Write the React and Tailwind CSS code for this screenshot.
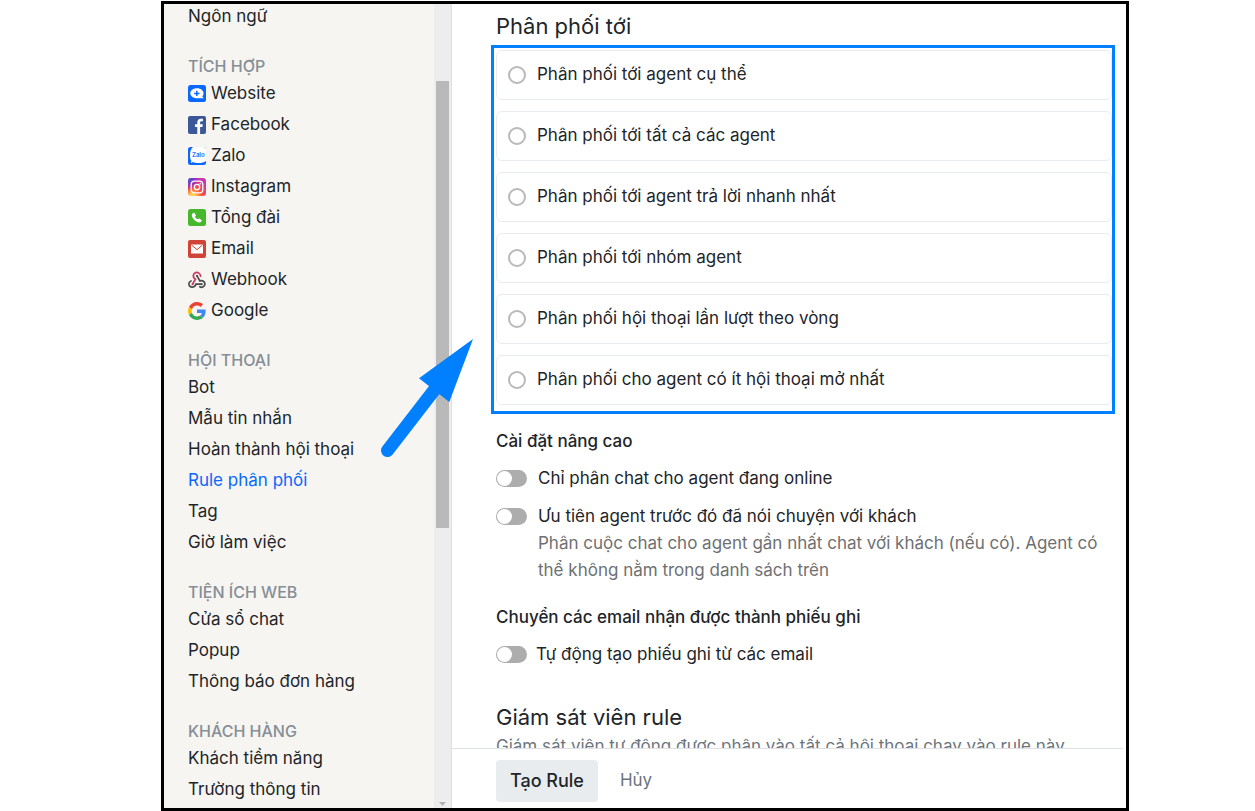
import React, { useState } from 'react';

const WebsiteIcon = () => (
    <svg viewBox="0 0 18 18" className="w-[18px] h-[18px]" aria-hidden="true">
        <rect width="18" height="17" rx="2.5" fill="#0a68ff" />
        <path d="M9 3.300c3.800 0 6.500 2.200 6.500 5 0 1.300-.5 2.300-1.200 3.100l1.400 1.900H9c-3.800 0-6.700-2.200-6.700-5s2.900-5 6.700-5z" fill="#fff" />
        <path d="M8.800 5.700v5.400M6.100 8.400h5.400" stroke="#0a68ff" strokeWidth="1.500" />
    </svg>
);

const FacebookIcon = () => (
    <svg viewBox="0 0 18 18" className="w-[18px] h-[18px]" aria-hidden="true">
        <rect width="18" height="18" rx="2" fill="#3b5998" />
        <path d="M9.300 18v-7H7V8.300h2.300V6.200c0-2.300 1.400-3.500 3.500-3.500 1 0 1.800.1 2.100.1v2.400h-1.400c-1.100 0-1.400.6-1.400 1.400v1.700h2.700l-.4 2.700h-2.300v7z" fill="#fff" />
    </svg>
);

const ZaloIcon = () => (
    <svg viewBox="0 0 18 18" className="w-[18px] h-[18px]" aria-hidden="true">
        <rect width="18" height="18" rx="2.500" fill="#0a68ff" />
        <path d="M5 0h10.500A2.500 2.500 0 0 1 18 2.500V14c-2 1.500-4.500 2-7.500 2-2.300 0-4.200-.3-5.500-1-.7.500-1.600.7-2.500.6.600-.5.9-1 .9-1.600C2.300 12.500 2 10.500 2 8c0-3.500 1-6.500 3-8z" fill="#fff" />
        <text x="10.300" y="10.300" textAnchor="middle" fontSize="6" fontWeight="700" fontFamily="Inter, sans-serif" fill="#2a7bff">Zalo</text>
    </svg>
);

const InstagramIcon = () => (
    <svg viewBox="0 0 18 18" className="w-[18px] h-[18px]" aria-hidden="true">
        <defs>
            <radialGradient id="ig-warm" cx="0.25" cy="1.05" r="1">
                <stop offset="0" stopColor="#ffdd55" />
                <stop offset="0.15" stopColor="#ffcf50" />
                <stop offset="0.5" stopColor="#ff543e" />
                <stop offset="1" stopColor="#c837ab" />
            </radialGradient>
            <radialGradient id="ig-cool" cx="-0.05" cy="0" r="0.7">
                <stop offset="0" stopColor="#3771c8" />
                <stop offset="0.3" stopColor="#5a4fd0" />
                <stop offset="1" stopColor="#6600ff" stopOpacity="0" />
            </radialGradient>
        </defs>
        <rect width="18" height="18" rx="3" fill="url(#ig-warm)" />
        <rect width="18" height="18" rx="3" fill="url(#ig-cool)" />
        <rect x="3.200" y="3.200" width="11.600" height="11.600" rx="3.400" fill="none" stroke="#fff" strokeWidth="1.300" />
        <circle cx="9" cy="9" r="2.700" fill="none" stroke="#fff" strokeWidth="1.300" />
        <circle cx="12.300" cy="5.700" r="0.800" fill="#fff" />
    </svg>
);

const PhoneIcon = () => (
    <svg viewBox="0 0 18 18" className="w-[18px] h-[18px]" aria-hidden="true">
        <rect width="18" height="17" rx="2.500" fill="#47b72b" />
        <path d="M4.300 4.700c.7-.9 1.600-1.300 2.200-.7l1.200 1.700c.4.700 0 1.200-.7 1.800.5 1.300 1.500 2.200 2.900 2.800.6-.7 1.100-1 1.800-.6l1.700 1.200c.6.600.2 1.400-.6 2.100-1 .8-2.700.6-4.400-.4-2-1.200-3.500-2.900-4.200-4.800-.4-1.200-.5-2.300.1-3.100z" fill="#fff" />
    </svg>
);

const EmailIcon = () => (
    <svg viewBox="0 0 18 18" className="w-[18px] h-[18px]" aria-hidden="true">
        <rect width="18" height="18" rx="2" fill="#d04437" />
        <rect x="3" y="4.500" width="12" height="9" rx="0.500" fill="#fff" />
        <path d="M3.500 5L9 9.700 14.500 5" fill="none" stroke="#d04437" strokeWidth="1" />
    </svg>
);

const WebhookIcon = () => (
    <svg viewBox="0 0 18 18" className="w-[18px] h-[18px]" fill="none" strokeWidth="1.700" strokeLinecap="round" aria-hidden="true">
        <path d="M9 4.800l2.900 5.100c2.700-.9 5 .9 5 3.200 0 2.500-2.900 4-5.100 2.600" stroke="#4b4b4b" />
        <path d="M13.600 13.200H7.900c-.5 3.600-6 3.900-6.900.6-.4-1.800.6-3.200 2-3.800" stroke="#4b4b4b" />
        <path d="M4.600 13l2.800-4.800C5.600 7.100 5 5.500 5.500 3.800 6.200 1.500 9 .7 10.900 2.100c1.200.8 1.700 1.900 1.700 3.100" stroke="#c73a63" />
        <circle cx="9" cy="4.700" r="1" fill="#4b4b4b" />
        <circle cx="4.500" cy="13.200" r="1" fill="#c73a63" />
        <circle cx="13.600" cy="13.200" r="1" fill="#4b4b4b" />
    </svg>
);

const GoogleIcon = () => (
    <svg viewBox="0 0 48 48" className="w-[18px] h-[18px]" aria-hidden="true">
        <path fill="#EA4335" d="M24 9.500c3.540 0 6.710 1.220 9.210 3.600l6.850-6.850C35.900 2.380 30.470 0 24 0 14.620 0 6.510 5.380 2.560 13.220l7.980 6.190C12.430 13.720 17.740 9.500 24 9.500z" />
        <path fill="#4285F4" d="M46.980 24.550c0-1.570-.15-3.090-.38-4.550H24v9.020h12.940c-.58 2.960-2.260 5.480-4.780 7.180l7.730 6c4.510-4.180 7.090-10.360 7.090-17.650z" />
        <path fill="#FBBC05" d="M10.530 28.590c-.48-1.450-.76-2.990-.76-4.590s.27-3.140.76-4.590l-7.980-6.190C.92 16.460 0 20.120 0 24c0 3.880.92 7.540 2.560 10.780l7.970-6.190z" />
        <path fill="#34A853" d="M24 48c6.480 0 11.930-2.130 15.890-5.810l-7.730-6c-2.150 1.450-4.920 2.300-8.160 2.300-6.260 0-11.570-4.220-13.470-9.910l-7.980 6.190C6.510 42.620 14.620 48 24 48z" />
    </svg>
);

const sections = [
    { items: [{ label: 'Ngôn ngữ' }] },
    {
        title: 'TÍCH HỢP',
        items: [
            { label: 'Website', icon: WebsiteIcon },
            { label: 'Facebook', icon: FacebookIcon },
            { label: 'Zalo', icon: ZaloIcon },
            { label: 'Instagram', icon: InstagramIcon },
            { label: 'Tổng đài', icon: PhoneIcon },
            { label: 'Email', icon: EmailIcon },
            { label: 'Webhook', icon: WebhookIcon },
            { label: 'Google', icon: GoogleIcon },
        ],
    },
    {
        title: 'HỘI THOẠI',
        items: [
            { label: 'Bot' },
            { label: 'Mẫu tin nhắn' },
            { label: 'Hoàn thành hội thoại' },
            { label: 'Rule phân phối', active: true },
            { label: 'Tag' },
            { label: 'Giờ làm việc' },
        ],
    },
    {
        title: 'TIỆN ÍCH WEB',
        items: [{ label: 'Cửa sổ chat' }, { label: 'Popup' }, { label: 'Thông báo đơn hàng' }],
    },
    {
        title: 'KHÁCH HÀNG',
        items: [{ label: 'Khách tiềm năng' }, { label: 'Trường thông tin' }],
    },
];

const targets = [
    'Phân phối tới agent cụ thể',
    'Phân phối tới tất cả các agent',
    'Phân phối tới agent trả lời nhanh nhất',
    'Phân phối tới nhóm agent',
    'Phân phối hội thoại lần lượt theo vòng',
    'Phân phối cho agent có ít hội thoại mở nhất',
];

const Sidebar = () => (
    <aside className="flex w-[288px] shrink-0 border-r border-[#e0e0e0] bg-[#f6f5f1]">
        <nav className="flex-1 min-w-0 overflow-hidden pl-6">
            <div className="-mt-[3px] flex flex-col gap-[22px]">
                {sections.map((section) => (
                    <div key={section.items[0].label}>
                        {section.title && (
                            <h3 className="h-6 leading-6 text-base font-medium text-[#868e96]">{section.title}</h3>
                        )}
                        <ul>
                            {section.items.map(({ label, icon: Icon, active }) => (
                                <li key={label}>
                                    <a
                                        href="#"
                                        className={`flex items-center gap-[5px] h-[31px] whitespace-nowrap ${active ? 'text-[#0a68ff]' : 'text-[#212529]'}`}
                                    >
                                        {Icon && <Icon />}
                                        {label}
                                    </a>
                                </li>
                            ))}
                        </ul>
                    </div>
                ))}
            </div>
        </nav>

        {/* Scrollbar */}
        <div className="flex w-[17px] flex-col items-center justify-between bg-[#ededed] pt-[77px]">
            <div className="h-[447px] w-[13px] bg-[#b9b9b9]" />
            <svg viewBox="0 0 7 4" className="mb-[2px] h-1 w-[7px]" aria-hidden="true">
                <path d="M0 0h7L3.500 4z" fill="#b0b0b0" />
            </svg>
        </div>
    </aside>
);

const Toggle = ({ id }) => (
    <input
        id={id}
        type="checkbox"
        role="switch"
        className="mt-[5px] flex h-[17px] w-[31px] shrink-0 appearance-none items-center rounded-full bg-[#adadad] px-px before:h-[15px] before:w-[15px] before:rounded-full before:bg-white checked:justify-end checked:bg-[#0a68ff]"
    />
);

export default function App() {
    const [target, setTarget] = useState(null);

    return (
        <div className="h-screen bg-white pt-px pl-[161px] pr-[126px] font-['Inter','Noto_Sans',sans-serif] text-[17px] text-[#212529]">
            <div className="relative flex h-full overflow-hidden border-3 border-black">
                <Sidebar />

                <main className="flex min-w-0 flex-1 flex-col">
                    <div className="min-h-0 flex-1 overflow-hidden pl-11 pr-[11px]">
                        <h2 className="pt-2 pb-[5px] text-[22px] leading-7">Phân phối tới</h2>

                        <div className="-ml-[5px] flex flex-col gap-[11px] border-3 border-[#0080ff] pt-[2px] pb-[6px] pl-[2px]">
                            {targets.map((label) => (
                                <label key={label} className="flex h-[50px] items-center gap-[11px] rounded-md border border-[#e9ecef] px-[11px]">
                                    <input
                                        type="radio"
                                        name="target"
                                        checked={target === label}
                                        onChange={() => setTarget(label)}
                                        className="h-[18px] w-[18px] shrink-0 appearance-none rounded-full border-2 border-[#b9b9b9] checked:border-[#0a68ff]"
                                    />
                                    {label}
                                </label>
                            ))}
                        </div>

                        <h3 className="mt-[14px] leading-[27px] font-medium">Cài đặt nâng cao</h3>
                        <div className="mt-[10px] flex gap-[11px]">
                            <Toggle id="online-only" />
                            <label htmlFor="online-only" className="leading-[27px]">Chỉ phân chat cho agent đang online</label>
                        </div>
                        <div className="mt-[11px] flex gap-[11px]">
                            <Toggle id="prefer-previous" />
                            <div className="leading-[27px]">
                                <label htmlFor="prefer-previous">Ưu tiên agent trước đó đã nói chuyện với khách</label>
                                <p className="text-[#6e7072]">
                                    Phân cuộc chat cho agent gần nhất chat với khách (nếu có). Agent có thể không nằm trong danh sách trên
                                </p>
                            </div>
                        </div>

                        <h3 className="mt-5 leading-[27px] font-medium">Chuyển các email nhận được thành phiếu ghi</h3>
                        <div className="mt-[10px] flex gap-[9px]">
                            <Toggle id="email-ticket" />
                            <label htmlFor="email-ticket" className="leading-[27px]">Tự động tạo phiếu ghi từ các email</label>
                        </div>

                        <h2 className="mt-[35px] text-[22px] leading-7">Giám sát viên rule</h2>
                        <p className="mt-[2px] leading-[27px] whitespace-nowrap text-[#6c757d]">
                            Giám sát viên tự động được phân vào tất cả hội thoại chạy vào rule này
                        </p>
                    </div>

                    <footer className="mr-[3px] flex h-[60px] shrink-0 items-center gap-2 border-t border-[#dee2e6] pt-1 pl-11">
                        <button type="button" className="h-[42px] rounded-sm bg-[#e9ecef] px-[14px] text-lg font-medium">Tạo Rule</button>
                        <button type="button" className="h-[42px] px-[14px] text-[#6c757d]">Hủy</button>
                    </footer>
                </main>

                {/* Pointer arrow */}
                <svg viewBox="380 338 94 120" className="pointer-events-none absolute top-[334px] left-[216px] h-[120px] w-[94px]" aria-hidden="true">
                    <path d="M387.500 450.500L435 389" stroke="#0080ff" strokeWidth="13" strokeLinecap="round" />
                    <path d="M473 339L419 378.300 449.300 402z" fill="#0080ff" />
                </svg>
            </div>
        </div>
    );
}
